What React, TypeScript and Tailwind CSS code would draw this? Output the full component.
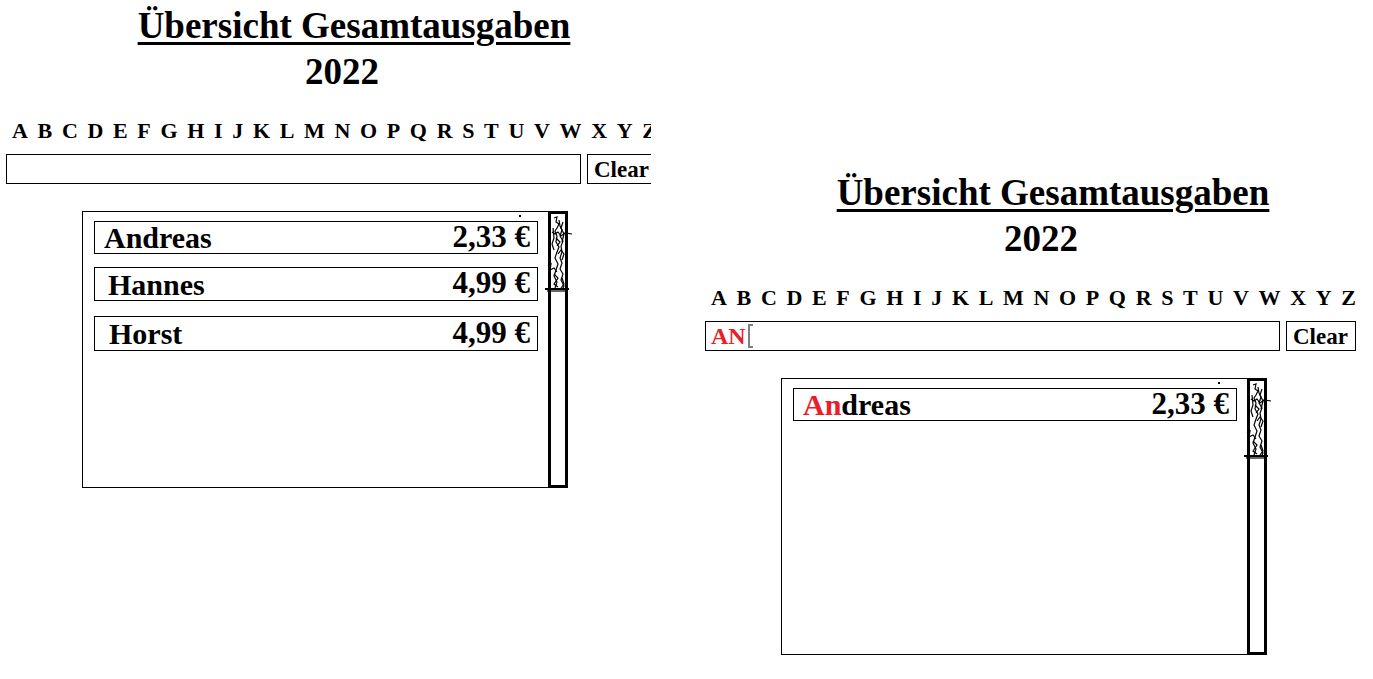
import React from 'react';

interface Entry {
    name: string;
    amount: string;
    pad: string;
    h: string;
    mt: string;
}

const entries: Entry[] = [
    { name: 'Andreas', amount: '2,33 €', pad: 'pl-[9px]', h: 'h-[33px]', mt: 'mt-0' },
    { name: 'Hannes', amount: '4,99 €', pad: 'pl-[13px]', h: 'h-[34px]', mt: 'mt-[13px]' },
    { name: 'Horst', amount: '4,99 €', pad: 'pl-[14px]', h: 'h-[35px]', mt: 'mt-[15px]' },
];

const letters = 'ABCDEFGHIJKLMNOPQRSTUVWXYZ'.split('');

const serif = { fontFamily: '"Liberation Serif", "DejaVu Serif", serif' };

// the scribbled scroll thumb, hand-drawn in the mockup
const Scribble = () => (
    <svg
        className="absolute left-[-6px] top-0 overflow-visible"
        width="30"
        height="80"
        viewBox="0 0 30 80"
        fill="none"
        stroke="black"
        strokeWidth="1.2"
    >
        <path d="M9 4 L12 3 L11 8 L14 10 L12 14 L10 17 L12 22 L11 28 L14 33 L12 38 L10 44 L13 50 L11 56 L9 62 L12 68 L10 74" />
        <path d="M14 6 L15 12 L17 16 L15 22 L18 27 L16 32 L17 38 L15 44 L17 49 L15 55 L18 60 L16 66 L19 72 L17 76" />
        <path d="M7 18 L10 20 L13 18 L16 22 L20 19 L27 20" />
        <path d="M8 14 L9 24 L7 30 L9 36" />
        <path d="M18 8 L16 14 L19 20 L17 28" />
        <path d="M3 52 L6 50 L5 56 L9 54 L12 58" />
        <path d="M13 40 L16 36 L19 40 L17 46" />
        <path d="M9 60 L13 64 L9 70 L13 73" />
        <path d="M17 64 L19 70 L16 74" />
        <path d="M11 24 L15 28 L12 32" />
        <path d="M0 75 L24 75" strokeWidth="2" />
        <path d="M2 77 L22 77" />
    </svg>
);

const Panel = ({ query }: { query: string }) => {
    const shown = entries.filter(e => e.name.toLowerCase().startsWith(query.toLowerCase()));

    return (
        <div className="w-[660px] shrink-0 text-black" style={serif}>
            <div className="pt-[4px] pl-[48px] text-center">
                <h1 className="text-[37px] leading-[44px] font-bold underline decoration-[3px] underline-offset-[4px]">
                    Übersicht Gesamtausgaben
                </h1>
            </div>
            <div className="pl-[24px] text-center text-[37px] leading-[44px] font-bold mt-[2px]">2022</div>

            <div className="flex justify-between ml-[12px] w-[645px] mt-[23px] text-[22px] leading-[28px] font-bold">
                {letters.map(l => (
                    <span key={l}>{l}</span>
                ))}
            </div>

            <div className="flex items-stretch mt-[9px] ml-[6px] h-[30px]">
                <div className="w-[575px] border border-black flex items-center pl-[5px] text-[24px] font-bold leading-none">
                    {query && <span className="text-[#e8202a]">{query.toUpperCase()}</span>}
                    {query && <span className="ml-[2px] w-[5px] h-[24px] border-2 border-r-0 border-[#808080]" />}
                </div>
                <button className="ml-[6px] w-[70px] border border-black text-[23px] font-bold leading-none text-left pl-[6px] bg-white">
                    Clear
                </button>
            </div>

            <div className="flex ml-[82px] mt-[27px] w-[486px] h-[277px]">
                <div className="flex-1 border border-r-0 border-black pt-[9px] pl-[11px] pr-[10px] relative">
                    <span className="absolute left-[436px] top-[3px] w-[2px] h-[2px] bg-black" />
                    {shown.map(e => (
                        <div
                            key={e.name}
                            className={`${e.h} ${e.mt} ${e.pad} pr-[7px] border border-black flex items-center justify-between font-bold leading-none`}
                        >
                            <span className="text-[30px] pt-[1px]">
                                {query ? (
                                    <>
                                        <span className="text-[#e8202a]">{e.name.slice(0, query.length)}</span>
                                        {e.name.slice(query.length)}
                                    </>
                                ) : (
                                    e.name
                                )}
                            </span>
                            <span className="text-[31px] pb-[3px]">{e.amount}</span>
                        </div>
                    ))}
                </div>
                <div className="w-[20px] border-[3px] border-black relative">
                    <Scribble />
                </div>
            </div>
        </div>
    );
};

export default function App() {
    return (
        <div className="flex items-start bg-white w-[1373px] h-[679px] overflow-hidden">
            <div className="w-[651px] overflow-hidden shrink-0">
                <Panel query="" />
            </div>
            <div className="ml-[48px] mt-[167px]">
                <Panel query="An" />
            </div>
        </div>
    );
}
